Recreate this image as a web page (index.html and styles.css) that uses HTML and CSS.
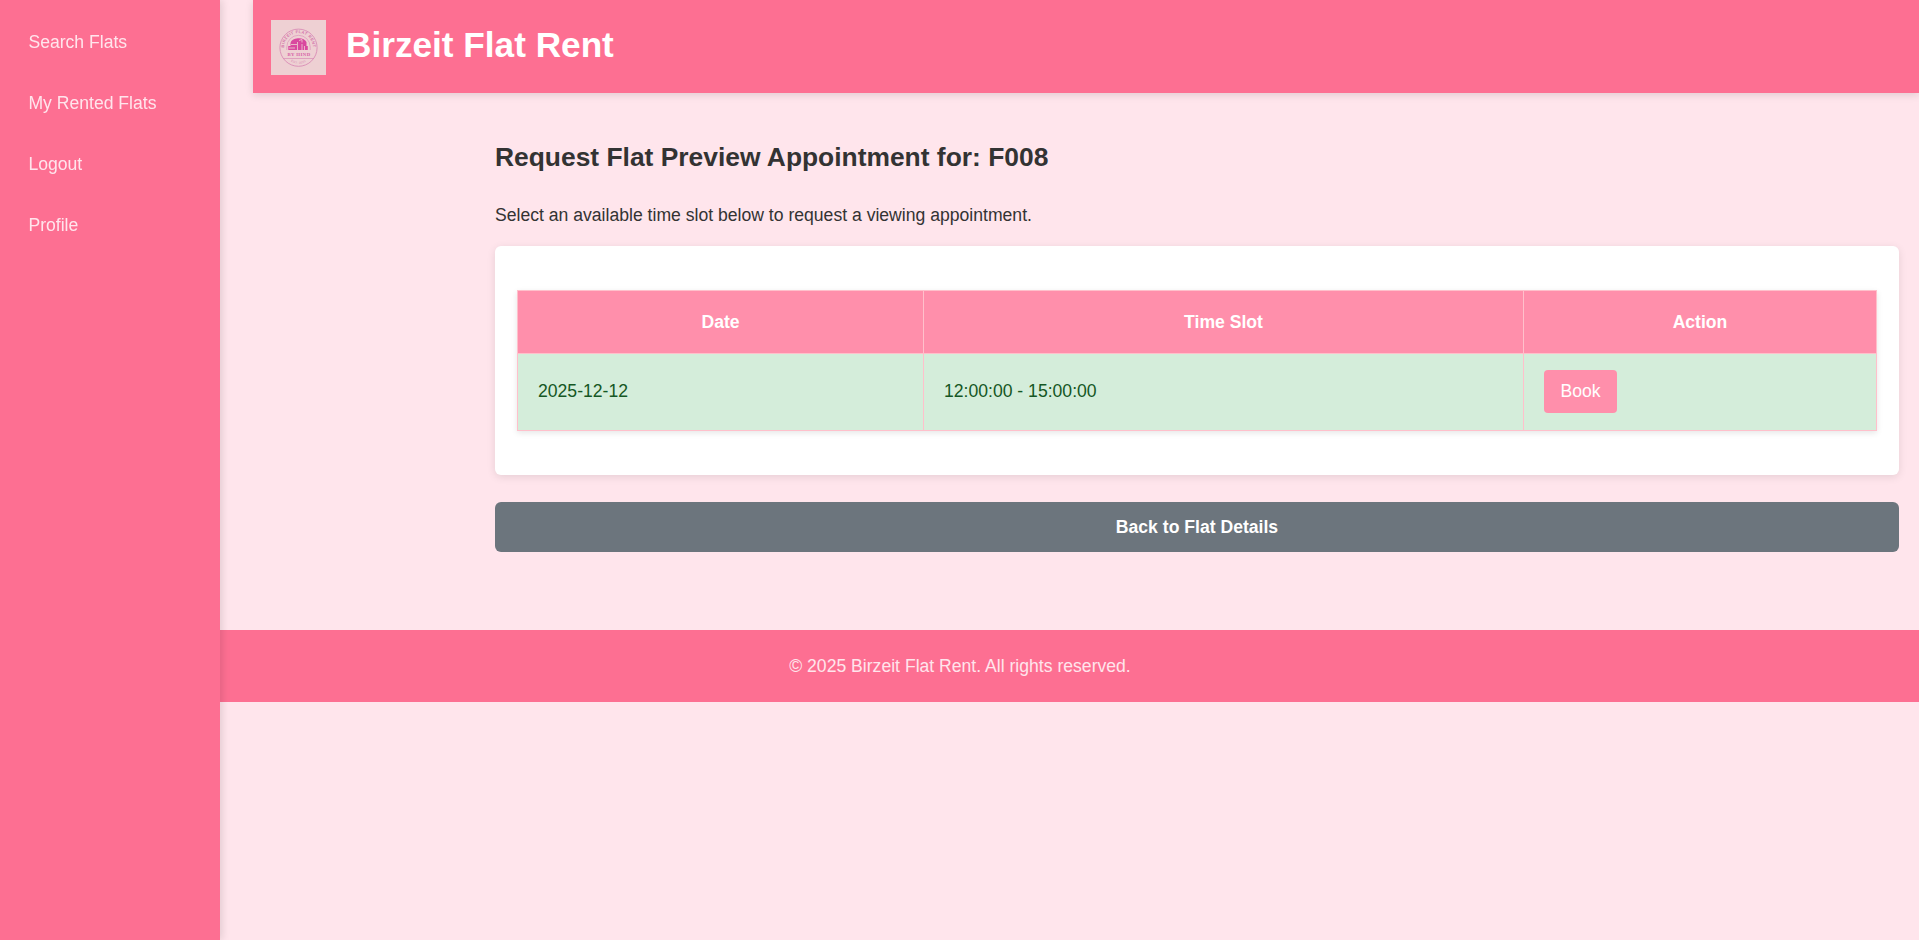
FILE: index.html
```html
<!DOCTYPE html>
<html lang="en">
<head>
<meta charset="utf-8">
<title>Birzeit Flat Rent</title>
<link rel="stylesheet" href="styles.css">
</head>
<body>
<nav class="sidebar">
  <a href="#">Search Flats</a>
  <a href="#">My Rented Flats</a>
  <a href="#">Logout</a>
  <a href="#">Profile</a>
</nav>
<header class="header">
  <svg class="logo" viewBox="0 0 55 55" role="img" aria-label="Birzeit Flat Rent by Hind">
    <defs>
      <path id="arc-top" d="M13 29.500V27.500A14.500 14.500 0 0 1 42 27.500V29.500"/>
      <path id="arc-bottom" d="M16 38Q27.500 50 39 38"/>
    </defs>
    <rect width="55" height="55" fill="#eed0d3"/>
    <g fill="none" stroke="#d98bb5">
      <circle cx="27.500" cy="27.700" r="18.600" stroke-width=".9"/>
      <path d="M15.800 30v-3a11.700 11.700 0 0 1 23.400 0v3" stroke-width=".6"/>
      <path d="M12 38.500h31" stroke-width=".7"/>
    </g>
    <path fill="#d9489f" d="M19.500 23a8.300 5.800 0 0 1 16-1v4h1.300v4H17.300v-4h2.200z"/>
    <path fill="none" stroke="#eed0d3" stroke-width=".8" d="M20 24.500h6M26.500 22v8M28 20.500l3-1v3M31 24v6M33.500 26v4M18 28h6"/>
    <text class="logo-ring"><textPath href="#arc-top" startOffset="50%" text-anchor="middle">BIRZEIT FLAT RENT</textPath></text>
    <text class="logo-name" x="28" y="36" text-anchor="middle">BY HIND</text>
    <text class="logo-est"><textPath href="#arc-bottom" startOffset="50%" text-anchor="middle">EST. 2025</textPath></text>
  </svg>
  <h1>Birzeit Flat Rent</h1>
</header>
<main class="content">
  <h2>Request Flat Preview Appointment for: F008</h2>
  <p class="intro">Select an available time slot below to request a viewing appointment.</p>
  <section class="card">
    <table class="slots">
      <colgroup><col class="col-date"><col class="col-time"><col></colgroup>
      <thead><tr><th>Date</th><th>Time Slot</th><th>Action</th></tr></thead>
      <tbody><tr><td>2025-12-12</td><td>12:00:00 - 15:00:00</td><td><button class="book" type="button">Book</button></td></tr></tbody>
    </table>
  </section>
  <a class="back" href="#">Back to Flat Details</a>
</main>
<footer class="footer">© 2025 Birzeit Flat Rent. All rights reserved.</footer>
</body>
</html>
```
FILE: styles.css
```css
* { box-sizing: border-box; }
body {
  margin: 0;
  background: #ffe5ec;
  color: #333;
  font: 17.6px/28px "Liberation Sans", Arial, sans-serif;
}
h1, h2, p { margin: 0; }
a { text-decoration: none; }
.sidebar {
  position: fixed;
  z-index: 2;
  inset: 0 auto 0 0;
  width: 220px;
  padding: 12px 10px;
  display: flex;
  flex-direction: column;
  background: #fd6f92;
  box-shadow: 2px 0 8px rgba(0, 0, 0, .12);
}
.sidebar a {
  height: 61px;
  padding: 0 18.400px;
  line-height: 61px;
  color: #ffe5ec;
}
.header {
  display: flex;
  align-items: flex-start;
  gap: 20px;
  height: 93px;
  margin-left: 253px;
  padding: 20px 18px 18px;
  background: #fd6f92;
  box-shadow: 0 2px 8px rgba(0, 0, 0, .12);
}
.logo { width: 55px; height: 55px; }
.logo-ring { font-size: 4px; font-weight: bold; fill: #d473aa; letter-spacing: .4px; }
.logo-name { font: bold 4.800px "Liberation Serif", serif; fill: #d65fa6; letter-spacing: .4px; }
.logo-est { font-size: 3px; fill: #d98bb5; letter-spacing: .3px; }
.header h1 { color: #fff; font-size: 35.2px; line-height: 50px; }
.content { margin-left: 495px; padding: 44px 20px 78px 0; }
.content h2 { font-size: 26.4px; line-height: 40px; }
.intro { margin: 24px 0 17px; }
.card {
  padding: 44px 22px;
  background: #fff;
  border-radius: 6px;
  box-shadow: 0 2px 8px rgba(0, 0, 0, .1);
}
.slots {
  width: 100%;
  border-collapse: collapse;
  table-layout: fixed;
  box-shadow: 0 2px 6px rgba(0, 0, 0, .1);
}
.col-date { width: 406px; }
.col-time { width: 600px; }
.slots th, .slots td { padding: 0 20px; border: 1px solid #ffc0cb; }
.slots th { height: 63px; background: #ff8fab; color: #fff; }
.slots td { height: 77px; padding-bottom: 2px; background: #d4edda; color: #155724; text-align: left; }
.book {
  display: block;
  width: 73px;
  height: 43px;
  padding: 0;
  border: 0;
  border-radius: 4px;
  background: #ff8fab;
  color: #fff;
  font: inherit;
}
.back {
  display: block;
  height: 50px;
  margin-top: 27px;
  border-radius: 6px;
  background: #6c757d;
  color: #fff;
  font-weight: bold;
  line-height: 50px;
  text-align: center;
}
.footer {
  height: 72px;
  padding-left: 1px;
  background: #fd6f92;
  color: #ffe5ec;
  line-height: 72px;
  text-align: center;
}
```
